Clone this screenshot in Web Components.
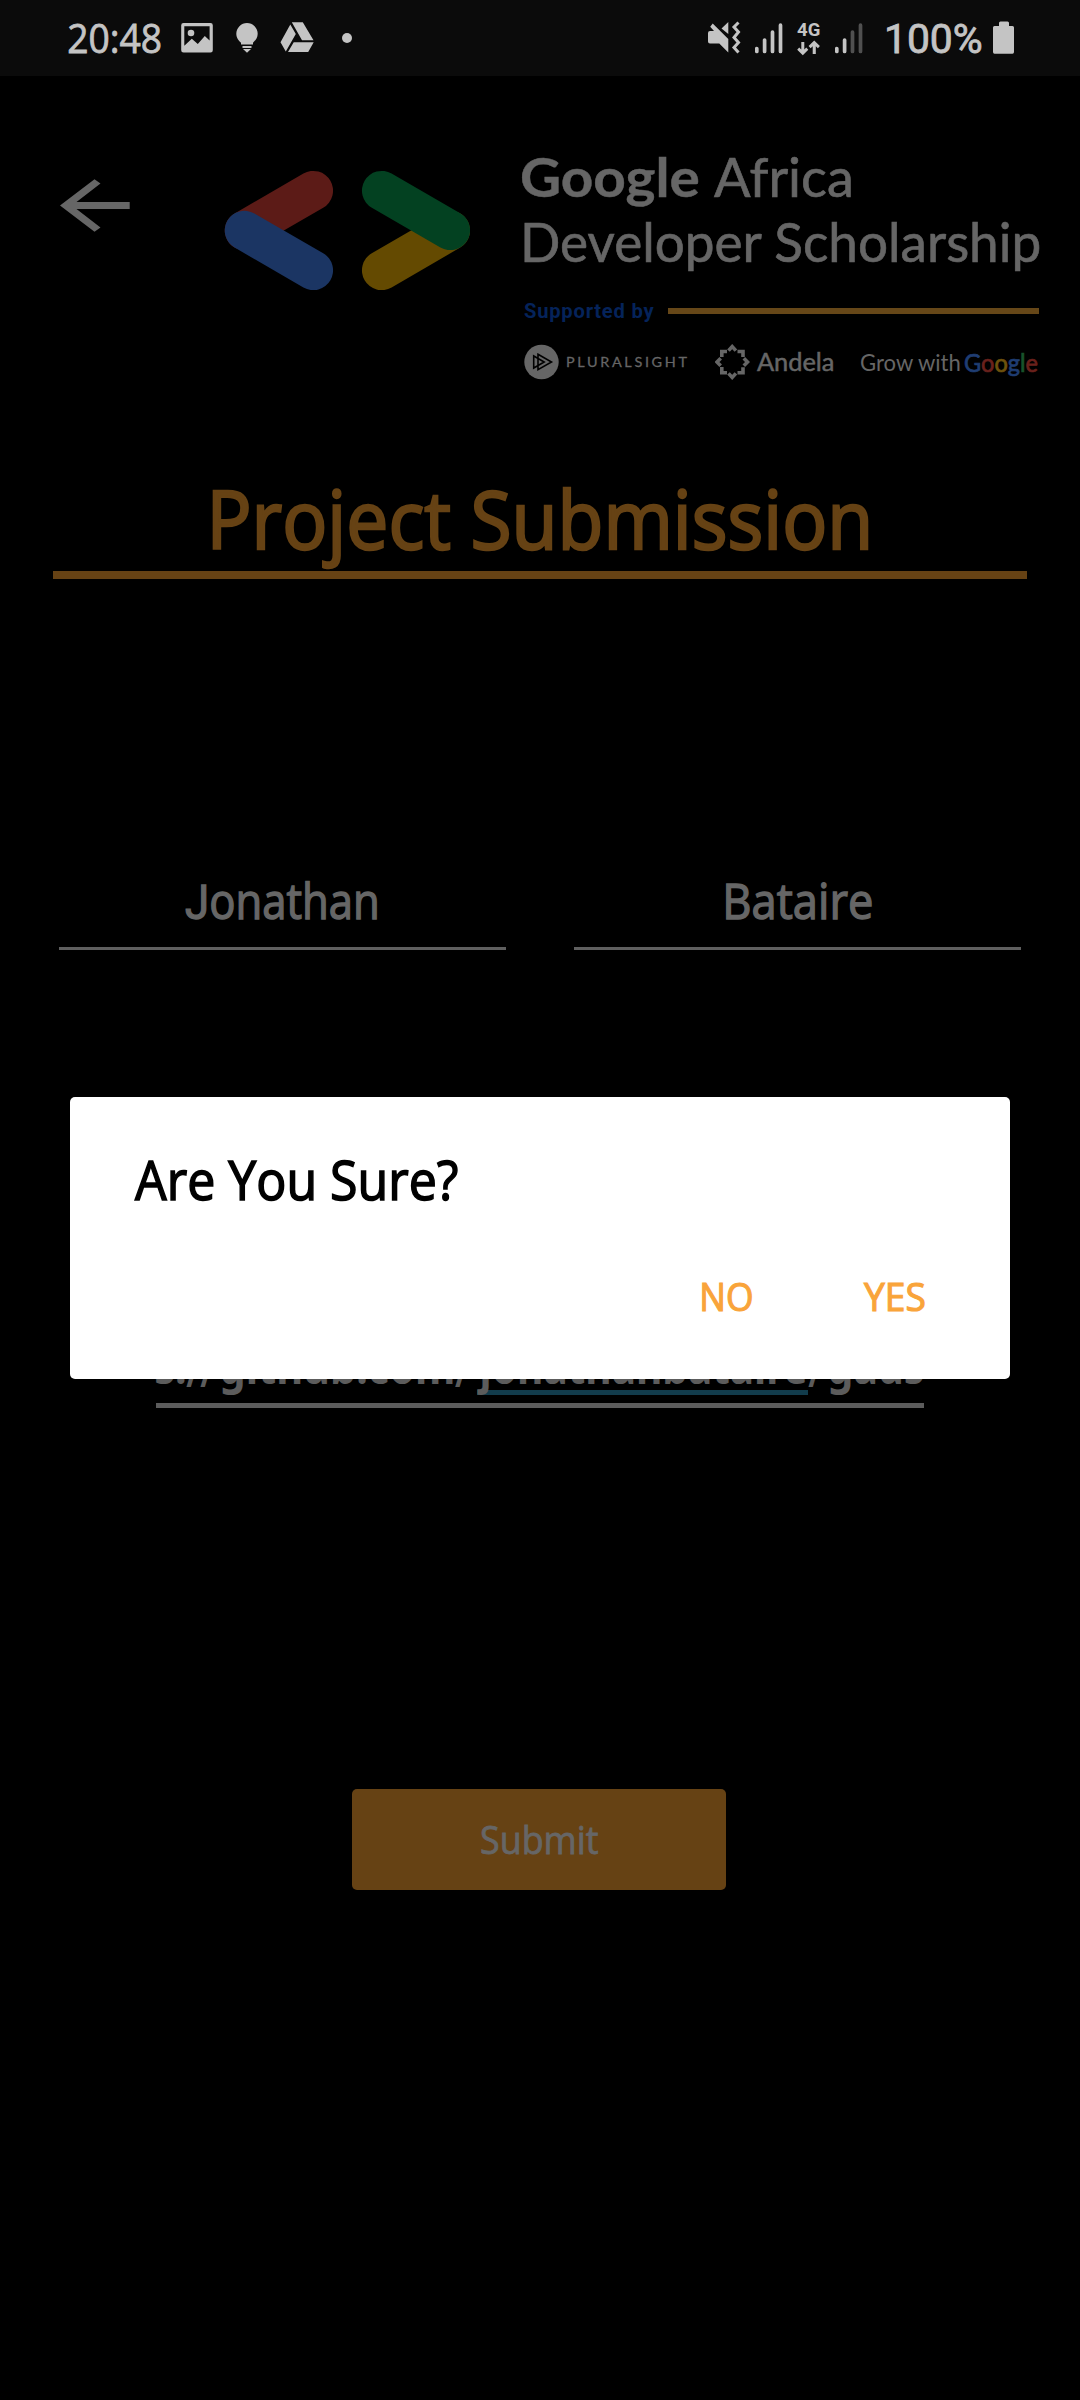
<!DOCTYPE html>
<html lang="en">
<head>
<meta charset="utf-8">
<title>Project Submission</title>
<style>
  html, body { margin: 0; background: #000; }
  body { width: 1080px; height: 2400px; overflow: hidden; font-family: "Open Sans", "Noto Sans", sans-serif; }
</style>
</head>
<body>
<submission-screen></submission-screen>

<script>
const ctx = document.createElement('canvas').getContext('2d');

function define(name, html) {
  customElements.define(name, class extends HTMLElement {
    constructor() {
      super();
      this.attachShadow({ mode: 'open' }).innerHTML = html;
    }
  });
}

/* A single-line label: its box spans the ink width and the cap height, and the baseline is its bottom edge.
   A <b> child is set in Roboto. */
customElements.define('fit-text', class extends HTMLElement {
  constructor() {
    super();
    this.attachShadow({ mode: 'open' }).innerHTML = `
      <style>
        :host { display: block; flex: none; }
        span { display: block; width: max-content; white-space: pre; transform-origin: 0 0; }
        u { display: inline-block; width: 0; height: 0; }
        ::slotted(b) { font-family: Roboto; font-weight: inherit; letter-spacing: var(--alt-spacing, inherit); }
      </style><span><slot></slot><u></u></span>`;
  }
  connectedCallback() {
    const width = +this.getAttribute('width'), cap = +this.getAttribute('cap');
    const size = +this.getAttribute('size'), weight = this.getAttribute('weight') || 400;
    const family = this.getAttribute('family') || 'Open Sans';
    const stroke = this.getAttribute('stroke') || 0;
    const spacing = this.getAttribute('spacing') || '0px';
    const fontOf = f => `${weight} ${size}px "${f}", sans-serif`;
    const measure = node => {
      ctx.font = fontOf(node.nodeName === 'B' ? 'Roboto' : family);
      ctx.letterSpacing = spacing;
      return ctx.measureText(node.textContent);
    };
    const span = this.shadowRoot.querySelector('span');
    span.style.cssText = `font:${fontOf(family)};letter-spacing:${spacing};line-height:${Math.round(size * 1.3)}px;-webkit-text-stroke:${stroke * size}px currentColor`;
    const box = span.getBoundingClientRect();
    const base = this.shadowRoot.querySelector('u').getBoundingClientRect().bottom - box.top;
    const nodes = [...this.childNodes];
    const first = measure(nodes[0]), last = measure(nodes[nodes.length - 1]);
    const left = first.actualBoundingBoxLeft;
    const ink = box.width + left - (last.width - last.actualBoundingBoxRight);
    const s = width / ink;
    span.style.transform = `translate(${left * s}px,${cap - base}px) scaleX(${s})`;
    this.style.width = width + 'px';
    this.style.height = cap + 'px';
  }
});

define('status-bar', `
  <style>
    :host { display: flex; height: 76px; background: #0b0b0b; color: #c4c4c4; justify-content: space-between; box-sizing: border-box; padding: 0 66px 0 69px; }
    div { display: flex; align-items: flex-start; }
    svg { display: block; fill: #c4c4c4; flex: none; }
    fit-text { margin-top: 24px; }
    .net { display: flex; flex-direction: column; margin-left: 14px; }
    .net fit-text { margin-top: 23px; }
  </style>
  <div>
    <fit-text width="92" cap="29" size="40.5" stroke=".02">20:48</fit-text>
    <svg width="32" height="76" viewBox="181 0 32 76" style="margin-left:20px"><path fill-rule="evenodd" d="M183.500 23h27a2.300 2.300 0 0 1 2.300 2.300v25a2.300 2.300 0 0 1-2.300 2.300h-27a2.300 2.300 0 0 1-2.300-2.300v-25a2.300 2.300 0 0 1 2.300-2.300zM184.300 26.200v19.500l7.500-7 6 5.300 7-8 4.800 4.500V26.200z"/><circle cx="191" cy="33" r="3.300"/></svg>
    <svg width="22" height="76" viewBox="236 0 22 76" style="margin-left:23px"><path d="M247 23a10.700 10.700 0 0 1 10.700 10.700c0 4.500-2.700 7-4.700 9v1.800h-12v-1.800c-2-2-4.700-4.500-4.700-9A10.700 10.700 0 0 1 247 23zM242.500 46h9v2h-9zM243 49h8l-4 3.700z"/></svg>
    <svg width="34" height="76" viewBox="280 0 34 76" style="margin-left:22px"><path d="M291.800 22.300h11l10.700 18h-11.500zM290.300 24.500l5.500 9.500-10 17.500-5.300-9.200zM293.700 42.300h20l-5.500 9.700h-20.200z"/></svg>
    <svg width="10" height="76" viewBox="342 0 10 76" style="margin-left:28px"><circle cx="347" cy="38" r="5"/></svg>
  </div>
  <div>
    <svg width="33" height="76" viewBox="708 0 33 76"><path d="M710.500 31h3.500l-3.800-4.200 2.500-3.200 15.600 15.500v13.500l-9-9h-9.300q-2-.2-2-2v-8.600q0-2 2-2zM721.500 28.500l6.800-6.500v12z"/><path d="M738.500 22.500l-4.500 4.500 4.500 5-4.500 5.500 4.500 5-4.500 5 4.500 5" fill="none" stroke="#c4c4c4" stroke-width="3"/></svg>
    <svg width="28" height="76" viewBox="755 0 28 76" style="margin-left:14px"><g stroke="#c4c4c4" stroke-width="3.700" stroke-linecap="round"><path d="M756.800 48.500v3M764.600 40v11.500M772.500 32v19.500M780.500 25.200v26.300"/></g></svg>
    <div class="net">
      <fit-text width="23" cap="13" size="18" weight="700" family="Roboto">4G</fit-text>
      <svg width="24" height="16" viewBox="797 40 24 16" style="margin-top:4px"><path d="M801.300 42h3v7.500l2-2 2 2.200-5.500 5.600-5.600-5.600 2-2.200 2.100 2zM812.700 54v-7.700l-2.100 2-2-2.200 5.600-5.500 5.700 5.500-2 2.200-2.100-2V54z"/></svg>
    </div>
    <svg width="28" height="76" viewBox="835 0 28 76" style="margin-left:14px"><g stroke="#c4c4c4" stroke-width="3.700" stroke-linecap="round"><path d="M836.800 48.500v3M844.600 40v11.500"/><path stroke="#505050" d="M852.500 32v19.500M860.500 25.200v26.300"/></g></svg>
    <fit-text width="94" cap="29" size="40.5" family="Roboto" stroke=".02" style="margin-left:24px">100%</fit-text>
    <svg width="21" height="76" viewBox="993 0 21 76" style="margin-left:12px"><path d="M999 26v-3q0-1.500 1.500-1.500h7q1.500 0 1.500 1.500v3h3.500q1.500 0 1.500 1.500v24.500q0 1.700-1.500 1.700h-18q-1.500 0-1.500-1.700V27.500q0-1.500 1.500-1.500z"/></svg>
  </div>`);

define('brand-header', `
  <style>
    :host { display: flex; align-items: flex-start; height: 324px; padding-left: 60px; box-sizing: border-box; color: #666; }
    svg { display: block; flex: none; }
    .arrow { margin-top: 103px; }
    .logo { margin: 94px 0 0 94px; }
    .words { display: flex; flex-direction: column; margin: 82px 0 0 52px; }
    .row { display: flex; align-items: flex-start; }
    .sup { margin-top: 41px; height: 15px; }
    .rule { width: 371px; height: 5.500px; background: #664718; margin: 5px 0 0 14px; }
    .partners { margin-top: 26px; }
    .g { color: #1f3d72; }
    .g i { font-style: normal; }
    .r { color: #6a211c; } .y { color: #6e520d; } .gr { color: #18532a; }
  </style>
  <svg class="arrow" width="70" height="53" viewBox="60 179 70 53"><path fill="#666" d="M60 205.500L94.500 179.300l6 4.200L76.500 202h53.200v7H76.500l24 18.500-6 4.200z"/></svg>
  <svg class="logo" width="246" height="120" viewBox="224 170 246 120"><g stroke-width="39.500" stroke-linecap="round"><path stroke="#5c1b17" d="M313.300 190.700L244.500 230.500"/><path stroke="#1b3563" d="M244.500 230.500L313.300 270.300"/><path stroke="#644a01" d="M381.700 270.300L450.300 230.500"/><path stroke="#034121" d="M381.700 190.700L450.300 230.300"/></g></svg>
  <div class="words">
    <div class="row"><fit-text width="177" cap="39" size="54" weight="700" family="Lato" stroke=".008">Google</fit-text><fit-text width="137" cap="39" size="54" family="Lato" stroke=".012" style="margin-left:14.500px">Africa</fit-text></div>
    <fit-text width="515" cap="39" size="54" family="Lato" stroke=".012" style="margin:26px 0 0 2px">Developer Scholarship</fit-text>
    <div class="row sup"><fit-text width="130" cap="15" size="21" weight="700" family="Roboto" spacing="0.8px" style="color:#05235a;margin-left:1.500px">Supported by</fit-text><div class="rule"></div></div>
    <div class="row partners">
      <svg width="35" height="36" viewBox="523.500 344 35 36" style="margin-left:1.500px"><circle cx="541" cy="362" r="17.200" fill="#666"/><g fill="none" stroke="#000" stroke-width="1.600"><path d="M537.500 354.300L551 362l-13.500 7.700zM533.200 356v12l10.500-6z"/></g></svg>
      <fit-text width="120" cap="9.700" size="13.500" family="Lato" stroke=".02" spacing="2.5px" style="margin:13px 0 0 8.500px">PLURALSIGHT</fit-text>
      <svg width="35" height="36" viewBox="715 344 35 36" style="margin-left:27.500px"><g fill="none" stroke="#666" stroke-width="3.600"><path d="M728.500 350.600l3.700-4 3.700 4M728.500 373.400l3.700 4 3.700-4M720.700 358.300l-3.700 3.700 3.700 3.700M743.800 358.300l3.700 3.700-3.700 3.700M721.800 357v-5.500h5.200M737.500 351.500h5.500v5.500M721.800 367v5.800h5.200M737.500 372.800h5.500v-5.500"/></g></svg>
      <fit-text width="76" cap="18" size="25" family="Lato" stroke=".02" style="margin:8.700px 0 0 7px">Andela</fit-text>
      <fit-text width="99" cap="16.500" size="23" family="Lato" style="margin:9.800px 0 0 28px">Grow with</fit-text>
      <fit-text class="g" width="72" cap="17.500" size="24.500" family="Lato" stroke=".03" style="margin:9.500px 0 0 5px">G<i class="r">o</i><i class="y">o</i>g<i class="gr">l</i><i class="r">e</i></fit-text>
    </div>
  </div>`);

define('screen-title', `
  <style>
    :host { display: flex; flex-direction: column; align-items: center; width: 974px; height: 88px; margin: 91px 0 0 53px; box-sizing: border-box; border-bottom: 8px solid #664214; color: #664214; }
  </style><slot></slot>`);

define('text-field', `
  <style>
    :host { display: flex; flex-direction: column; align-items: center; flex: 1; height: 66px; box-sizing: border-box; border-bottom: 3px solid #5f5f5f; color: #666; }
  </style><slot></slot>`);

define('link-field', `
  <style>
    :host { display: flex; height: 58px; width: 768px; box-sizing: border-box; border-bottom: 5px solid #5c5c5c; color: #5c5c5c; --alt-spacing: 4px; }
    .hl { height: 44.500px; border-bottom: 5.500px solid #123c4c; box-sizing: border-box; width: 331px; margin-left: 3px; }
  </style>
  <fit-text width="318" cap="33.500" size="47" weight="700" family="Noto Sans">s:<b>//</b>github.com<b>/</b></fit-text>
  <div class="hl"><fit-text width="329" cap="33.500" size="47" weight="700" family="Noto Sans">jonathanbataire</fit-text></div>
  <fit-text width="115" cap="33.500" size="47" weight="700" family="Noto Sans"><b>/</b>gads</fit-text>`);

define('submit-button', `
  <style>
    :host { display: flex; justify-content: center; width: 374px; height: 101px; box-sizing: border-box; padding-top: 37px; border-radius: 5px; background: #664214; color: #666; }
  </style><slot></slot>`);

define('confirm-dialog', `
  <style>
    :host { position: absolute; left: 70px; top: 1097px; width: 940px; height: 282px; box-sizing: border-box; background: #fff; border-radius: 5px; color: #000; padding: 64px 85px 0 64.500px; display: flex; flex-direction: column; }
    .actions { display: flex; justify-content: flex-end; gap: 112px; margin-top: 83px; color: #f9a43a; }
  </style>
  <fit-text width="323" cap="39" size="54.5" stroke=".028">Are You Sure?</fit-text>
  <div class="actions"><fit-text width="50" cap="27.500" size="38" stroke=".03">NO</fit-text><fit-text width="61" cap="27.500" size="38" stroke=".03">YES</fit-text></div>`);

define('submission-screen', `
  <style>
    :host { display: flex; flex-direction: column; position: relative; width: 1080px; height: 2400px; background: #000; }
    .names { display: flex; gap: 68px; margin: 305px 59px 0; }
    link-field { margin: 400px 0 0 156px; }
    submit-button { margin: 381px 0 0 352px; }
  </style>
  <status-bar></status-bar>
  <brand-header></brand-header>
  <screen-title><fit-text width="655" cap="58" size="81" stroke=".03">Project Submission</fit-text></screen-title>
  <div class="names">
    <text-field><fit-text width="191" cap="35" size="49" stroke=".028" style="margin-right:3px"><b>J</b>onathan</fit-text></text-field>
    <text-field><fit-text width="145" cap="35" size="49" stroke=".028" style="margin-left:1px">Bataire</fit-text></text-field>
  </div>
  <link-field></link-field>
  <submit-button><fit-text width="117" cap="27.500" size="38" stroke=".022">Submit</fit-text></submit-button>
  <confirm-dialog></confirm-dialog>`);
</script>
</body>
</html>
